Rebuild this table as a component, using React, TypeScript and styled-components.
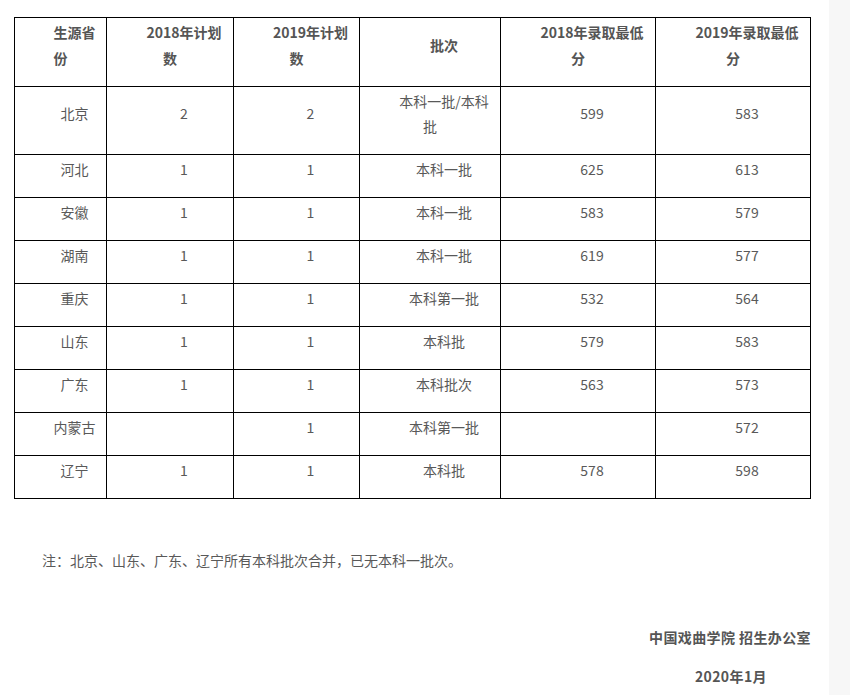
import React from 'react';
import styled, { createGlobalStyle } from 'styled-components';

const GlobalStyle = createGlobalStyle`
  html, body {
    margin: 0;
    padding: 0;
    background: #f7f7f7;
  }
  body {
    font-family: "Microsoft YaHei", "Noto Sans CJK SC", "Noto Sans", sans-serif;
    font-size: 14px;
    color: #595959;
  }
`;

const Page = styled.div`
  width: 829px;
  min-height: 695px;
  background: #fff;
  padding: 17px 0 0 14px;
  box-sizing: border-box;
`;

const Table = styled.table`
  border-collapse: collapse;
  table-layout: fixed;
  width: 796px;
`;

const Cell = styled.td<{ $w?: number }>`
  border: 1px solid #000;
  padding: 2px 10px;
  vertical-align: middle;
  text-align: center;
  ${(p) => (p.$w ? `width: ${p.$w}px;` : '')}
  box-sizing: border-box;
`;

const Para = styled.p<{ $bold?: boolean }>`
  margin: 0 0 12.5px;
  line-height: 25.5px;
  text-indent: 2em;
  font-weight: ${(p) => (p.$bold ? 700 : 400)};
  color: ${(p) => (p.$bold ? '#555' : '#595959')};
`;

const Note = styled.p`
  margin: 48px 0 0;
  line-height: 26px;
  text-indent: 2em;
  color: #595959;
`;

const Signature = styled.p<{ $right: number; $top: number }>`
  margin: ${(p) => p.$top}px 0 0;
  padding-right: ${(p) => p.$right}px;
  text-align: right;
  line-height: 26px;
  font-weight: 700;
  letter-spacing: 0.4px;
  color: #555;
`;

const widths = [92, 127, 126, 141, 155, 155];

const headers = ['生源省份', '2018年计划数', '2019年计划数', '批次', '2018年录取最低分', '2019年录取最低分'];

const rows: string[][] = [
  ['北京', '2', '2', '本科一批/本科批', '599', '583'],
  ['河北', '1', '1', '本科一批', '625', '613'],
  ['安徽', '1', '1', '本科一批', '583', '579'],
  ['湖南', '1', '1', '本科一批', '619', '577'],
  ['重庆', '1', '1', '本科第一批', '532', '564'],
  ['山东', '1', '1', '本科批', '579', '583'],
  ['广东', '1', '1', '本科批次', '563', '573'],
  ['内蒙古', '', '1', '本科第一批', '', '572'],
  ['辽宁', '1', '1', '本科批', '578', '598'],
];

export default function App() {
  return (
    <>
      <GlobalStyle />
      <Page>
        <Table>
          <tbody>
            <tr>
              {headers.map((h, i) => (
                <Cell key={i} $w={widths[i]}>
                  <Para $bold>{h}</Para>
                </Cell>
              ))}
            </tr>
            {rows.map((r, ri) => (
              <tr key={ri}>
                {r.map((c, ci) => (
                  <Cell key={ci}>
                    <Para>{c || '\u00a0'}</Para>
                  </Cell>
                ))}
              </tr>
            ))}
          </tbody>
        </Table>
        <Note>注：北京、山东、广东、辽宁所有本科批次合并，已无本科一批次。</Note>
        <Signature $right={18} $top={51}>中国戏曲学院 招生办公室</Signature>
        <Signature $right={62} $top={13}>2020年1月</Signature>
      </Page>
    </>
  );
}
